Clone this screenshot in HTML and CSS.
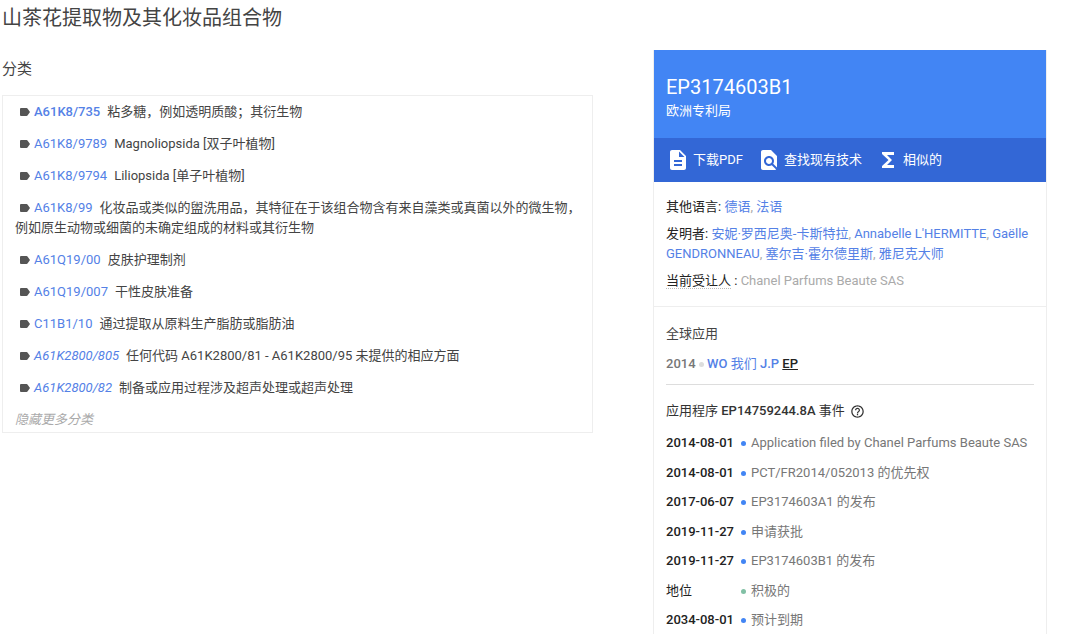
FILE: index.html
```html
<!DOCTYPE html>
<html lang="zh-CN">
  <head>
    <meta charset="utf-8">
    <title>EP3174603B1 - 山茶花提取物及其化妆品组合物</title>
    <link rel="stylesheet" href="styles.css">
  </head>
  <body>
    <svg class="sprite" width="0" height="0" aria-hidden="true">
      <symbol id="label" viewBox="0 0 10 8">
        <path d="M1 0h5.600c.4 0 .7.2.9.5L10 4 7.500 7.500c-.2.3-.5.500-.9.500H1a1 1 0 0 1-1-1V1a1 1 0 0 1 1-1z"/>
      </symbol>
    </svg>

    <div class="page">
      <main class="content">
        <h1>山茶花提取物及其化妆品组合物</h1>
        <h2>分类</h2>
        <div class="classifications">
          <ul>
            <li><svg class="tag"><use href="#label"/></svg><a class="main" href="#">A61K8/735</a><span class="desc">粘多糖，例如透明质酸；其衍生物</span></li>
            <li><svg class="tag"><use href="#label"/></svg><a href="#">A61K8/9789</a><span class="desc">Magnoliopsida [双子叶植物]</span></li>
            <li><svg class="tag"><use href="#label"/></svg><a href="#">A61K8/9794</a><span class="desc">Liliopsida [单子叶植物]</span></li>
            <li><svg class="tag"><use href="#label"/></svg><a href="#">A61K8/99</a><span class="desc">化妆品或类似的盥洗用品，其特征在于该组合物含有来自藻类或真菌以外的微生物，例如原生动物或细菌的未确定组成的材料或其衍生物</span></li>
            <li><svg class="tag"><use href="#label"/></svg><a href="#">A61Q19/00</a><span class="desc">皮肤护理制剂</span></li>
            <li><svg class="tag"><use href="#label"/></svg><a href="#">A61Q19/007</a><span class="desc">干性皮肤准备</span></li>
            <li><svg class="tag"><use href="#label"/></svg><a href="#">C11B1/10</a><span class="desc">通过提取从原料生产脂肪或脂肪油</span></li>
            <li><svg class="tag"><use href="#label"/></svg><a class="extra" href="#">A61K2800/805</a><span class="desc">任何代码 A61K2800/81 - A61K2800/95 未提供的相应方面</span></li>
            <li><svg class="tag"><use href="#label"/></svg><a class="extra" href="#">A61K2800/82</a><span class="desc">制备或应用过程涉及超声处理或超声处理</span></li>
          </ul>
          <button class="more" type="button">隐藏更多分类</button>
        </div>
      </main>

      <aside class="card">
        <header class="card-header">
          <h2>EP3174603B1</h2>
          <p>欧洲专利局</p>
        </header>
        <nav class="actions">
          <a href="#">
            <svg width="24" height="24" viewBox="0 0 24 24"><path d="M14 2H6c-1.100 0-2 .9-2 2v16c0 1.100.9 2 2 2h12c1.100 0 2-.9 2-2V8l-6-6zm2 16H8v-2h8v2zm0-4H8v-2h8v2zm-3-5V3.500L18.500 9H13z"/></svg>
            下载PDF
          </a>
          <a href="#">
            <svg width="24" height="24" viewBox="0 0 24 24"><path d="M20 19.590V8l-6-6H6c-1.100 0-2 .9-2 2v16c0 1.100.9 2 2 2h12c.45 0 .85-.15 1.190-.4l-4.430-4.430c-.8.520-1.740.83-2.760.83-2.760 0-5-2.240-5-5s2.240-5 5-5 5 2.240 5 5c0 1.020-.31 1.960-.83 2.750L20 19.590zM9 13c0 1.660 1.340 3 3 3s3-1.340 3-3-1.340-3-3-3-3 1.340-3 3z"/></svg>
            查找现有技术
          </a>
          <a href="#">
            <svg width="24" height="24" viewBox="0 0 24 24"><path d="M18 4H6v2l6.500 6L6 18v2h12v-3h-7l5-5-5-5h7z"/></svg>
            相似的
          </a>
        </nav>

        <dl class="facts">
          <div>
            <dt>其他语言:</dt>
            <dd><a href="#">德语</a>, <a href="#">法语</a></dd>
          </div>
          <div>
            <dt>发明者:</dt>
            <dd><a href="#">安妮·罗西尼奥-卡斯特拉</a>, <a href="#">Annabelle L'HERMITTE</a>, <a href="#">Gaëlle GENDRONNEAU</a>, <a href="#">塞尔吉·霍尔德里斯</a>, <a href="#">雅尼克大师</a></dd>
          </div>
          <div>
            <dt><span class="hint">当前受让人</span> :</dt>
            <dd>Chanel Parfums Beaute SAS</dd>
          </div>
        </dl>

        <section class="timeline">
          <h3>全球应用</h3>
          <p class="worldwide">2014 <i></i> <a href="#">WO</a> <a class="cjk" href="#">我们</a> <a href="#">J.P</a> <a class="current" href="#">EP</a></p>
          <h3 class="events-title">
            <span>应用程序 <strong>EP14759244.8A</strong> 事件</span>
            <svg width="15" height="15" viewBox="0 0 24 24"><path d="M11 18h2v-2h-2v2zm1-16C6.480 2 2 6.480 2 12s4.480 10 10 10 10-4.480 10-10S17.520 2 12 2zm0 18c-4.410 0-8-3.590-8-8s3.590-8 8-8 8 3.590 8 8-3.590 8-8 8zm0-14c-2.210 0-4 1.790-4 4h2c0-1.100.9-2 2-2s2 .9 2 2c0 2-3 1.750-3 5h2c0-2.250 3-2.500 3-5 0-2.210-1.790-4-4-4z"/></svg>
          </h3>
          <ol class="events">
            <li><time>2014-08-01</time><span>Application filed by Chanel Parfums Beaute SAS</span></li>
            <li><time>2014-08-01</time><span>PCT/FR2014/052013 的优先权</span></li>
            <li><time>2017-06-07</time><span>EP3174603A1 的发布</span></li>
            <li><time>2019-11-27</time><span>申请获批</span></li>
            <li><time>2019-11-27</time><span>EP3174603B1 的发布</span></li>
            <li class="active"><b>地位</b><span>积极的</span></li>
            <li><time>2034-08-01</time><span>预计到期</span></li>
          </ol>
        </section>
      </aside>
    </div>
  </body>
</html>
```

FILE: styles.css
```css
* {
  box-sizing: border-box;
}
body {
  margin: 0;
  font-family: Roboto, "Noto Sans CJK SC", sans-serif;
  font-size: 13px;
  line-height: 20px;
  color: #444;
  background-color: #fff;
}
h1, h2, h3, p, ul, ol, dl, dd {
  margin: 0;
  padding: 0;
  font-weight: normal;
}
ul, ol {
  list-style: none;
}
a {
  color: #5481e6;
  text-decoration: none;
}
.sprite {
  position: absolute;
}
.page {
  display: grid;
  grid-template-columns: 3fr 2fr;
  gap: 60px;
  min-height: 100vh;
  padding: 0 33px 0 2px;
}

/* left column */
.content h1 {
  padding-top: 4px;
  font-size: 20px;
  line-height: 28px;
}
.content h2 {
  margin: 27px 0 16px;
  font-size: 15px;
}
.classifications {
  padding: 6px 8px 2px 12px;
  border: 1px solid #eee;
}
.classifications li {
  margin-bottom: 12px;
}
.tag {
  width: 10px;
  height: 8px;
  margin: 0 4px 0 5px;
  fill: #555;
}
.main {
  font-weight: 500;
}
.extra {
  font-style: italic;
}
.desc {
  margin-left: 7px;
}
.more {
  display: block;
  padding: 0;
  border: 0;
  background: none;
  font: inherit;
  font-style: italic;
  color: #aaa;
  cursor: pointer;
}

/* right column */
.card {
  margin-top: 50px;
  border: solid #eee;
  border-width: 0 1px;
}
.card-header {
  padding: 24px 12px 17px;
  background-color: #4285f4;
  color: #fff;
}
.card-header h2 {
  font-size: 20px;
  line-height: 27px;
}
.actions {
  display: flex;
  gap: 14px;
  padding: 10px 12px;
  background-color: #3367d6;
}
.actions a {
  display: flex;
  align-items: center;
  gap: 3px;
  color: #fff;
}
.actions svg {
  fill: #fff;
}
.facts {
  display: grid;
  gap: 7px;
  padding: 15px 12px;
  border-bottom: 1px solid #eee;
}
.facts dt,
.facts dd {
  display: inline;
}
.facts dt {
  color: #222;
}
.facts dd {
  color: #aaa;
}
.hint {
  border-bottom: 1px dotted #bbb;
}
.timeline {
  padding: 17px 12px 0;
}
.timeline h3 {
  font-size: 13px;
}
.timeline strong {
  font-weight: 500;
}
.worldwide {
  padding: 10px 0;
  border-bottom: 1px solid #ddd;
  font-weight: 500;
  color: #777;
}
.worldwide i {
  display: inline-block;
  width: 5px;
  height: 5px;
  border-radius: 50%;
  background-color: #ddd;
  vertical-align: middle;
}
.worldwide .cjk {
  font-weight: 400;
}
.worldwide .current {
  color: #222;
  text-decoration: underline;
}
.timeline .events-title {
  display: flex;
  align-items: center;
  gap: 5px;
  padding: 16px 0 12px;
  color: #333;
}
.events-title svg {
  fill: #333;
}
.events {
  display: grid;
  align-content: space-between;
  min-height: 197px;
}
.events li {
  display: grid;
  grid-template-columns: 75px 1fr;
  color: #777;
}
.events time {
  font-weight: 500;
  color: #222;
}
.events b {
  font-weight: 400;
  color: #222;
}
.events span::before {
  content: "";
  display: inline-block;
  width: 5px;
  height: 5px;
  margin-right: 5px;
  border-radius: 50%;
  background-color: #4285f4;
  vertical-align: middle;
}
.events .active span::before {
  background-color: #81c0a5;
}
```
